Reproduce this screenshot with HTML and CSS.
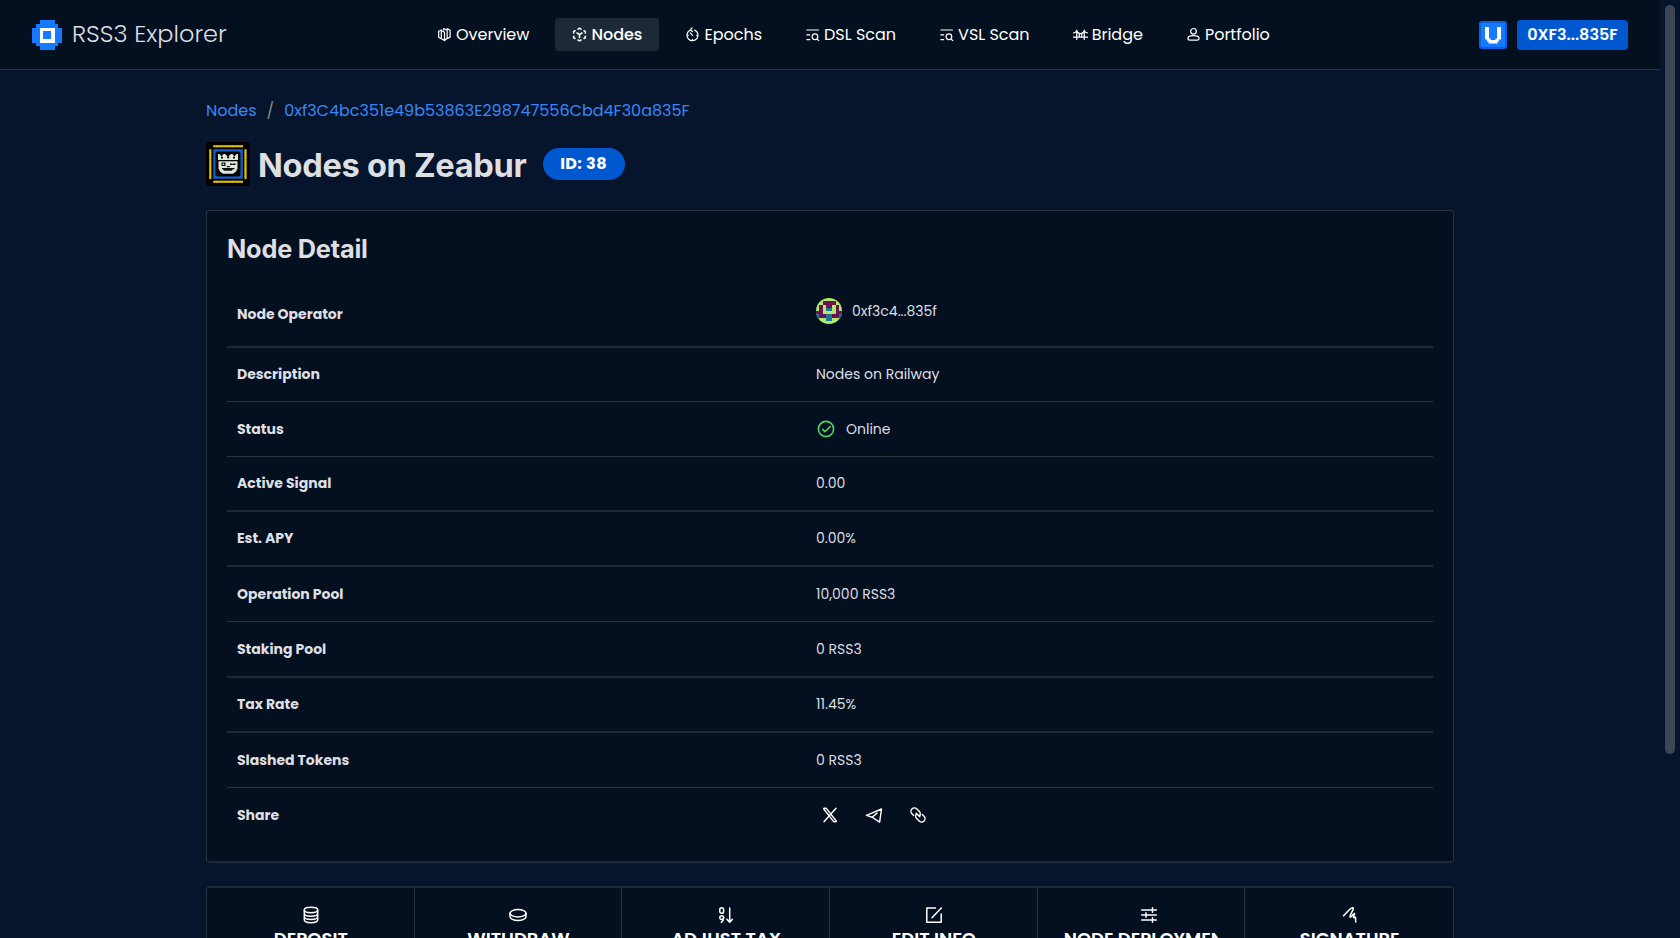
FILE: index.html
```
<!DOCTYPE html>
<html lang="en">
<head>
<meta charset="utf-8">
<title>RSS3 Explorer</title>
<link rel="stylesheet" href="styles.css">
</head>
<body>
<header class="header">
  <a class="brand">
    <svg class="brand-logo" viewBox="0 0 8 8" shape-rendering="crispEdges"><path fill="#147aff" d="M2 0h4v1h1v1h1v4h-1v1h-1v1h-4v-1h-1v-1h-1v-4h1v-1h1z"/><path fill="#fff" d="M2 2h4v4h-4z"/><path fill="#147aff" d="M3 3h2v2h-2z"/></svg>
    <span>RSS3 Explorer</span>
  </a>
  <nav class="nav">
    <a class="nav-item"><svg class="ico" viewBox="0 0 16 16"><path d="M4.600 12.600 1.800 11V4.600l2.800-1.400M4.600 3.800l3.400 1.800v8.800l-3.400-1.800zM7.200 3.400V1.600l3.600 1.800V12L8 14.400M10.800 3.400l.2-1.600L14 3.600v7.200l-3.200 1.600"/></svg>Overview</a>
    <a class="nav-item active"><svg class="ico" viewBox="0 0 16 16"><path stroke-width="1.700" d="M6.400 2.300 8 1.400l1.600.9M12.800 4l1.400.8v1.600M14.200 10v1.400l-1.400.8M9.600 13.900l-1.600.9-1.600-.9M3.200 12.200l-1.400-.8V10M1.800 6.400V4.800L3.200 4M8 11.200v-3L5.400 6.400M8 8.200l2.600-1.800"/></svg>Nodes</a>
    <a class="nav-item"><svg class="ico" viewBox="0 0 16 16"><path d="M10.300 3.300a5.900 5.900 0 1 1-5.400.4M8 9 5.600 6.300M7.600 1 5.700 3.200l2.300 1.700M8 13.200v1.400M2.200 9h1.300M12.500 9h1.300"/></svg>Epochs</a>
    <a class="nav-item"><svg class="ico" viewBox="0 0 16 16"><path d="M2 3.200h12.400M2 8.400h3M2 13.400h3M13.200 13.400l1.500 1"/><circle cx="10.600" cy="10.400" r="3"/></svg>DSL Scan</a>
    <a class="nav-item"><svg class="ico" viewBox="0 0 16 16"><path d="M2 3.200h12.400M2 8.400h3M2 13.400h3M13.200 13.400l1.500 1"/><circle cx="10.600" cy="10.400" r="3"/></svg>VSL Scan</a>
    <a class="nav-item"><svg class="ico" viewBox="0 0 16 16"><path d="M.5 10.700h15M4 3.400v9.800M12 3.400v9.800M.7 6.200C2.400 6 3.600 5.200 4 3.800 4.800 8 11.200 8 12 3.800c.4 1.400 1.600 2.200 3.300 2.400M6.700 7.200v3.400M9.300 7.200v3.400"/></svg>Bridge</a>
    <a class="nav-item"><svg class="ico" viewBox="0 0 16 16"><circle cx="8" cy="4.600" r="3"/><path d="M2.100 12.200c0-1.600 2.400-2.900 5.900-2.900s5.900 1.300 5.900 2.900c0 1.100-.9 1.700-2.200 1.700H4.300c-1.300 0-2.200-.6-2.200-1.700z"/></svg>Portfolio</a>
  </nav>
  <div class="account">
    <svg class="chain" viewBox="0 0 28 28"><rect width="28" height="28" rx="3" fill="#0b5fe0"/><path fill="#147aff" d="M2 2h24v24H2z"/><path fill="#fff" d="M6 6h4v11.500h1.500V19h5v-1.500H18V6h4v12.500h-2v2h-1.500v2h-9v-2H8v-2H6z"/></svg>
    <button class="wallet">0XF3...835F</button>
  </div>
</header>
<div class="scroll-thumb"></div>
<main class="main">
  <div class="crumbs"><a>Nodes</a><span class="sep">/</span><a>0xf3C4bc351e49b53863E298747556Cbd4F30a835F</a></div>
  <div class="title-row">
    <svg class="node-avatar" viewBox="0 0 44 44">
      <rect width="44" height="44" rx="3.500" fill="#000"/>
      <path stroke="#a88700" stroke-width="2" d="M7.500 4.200h29.500M7.500 39.700h29.500M4.300 7.500V37M39.500 7.500V37"/>
      <path stroke="#ffe600" stroke-width="2" stroke-dasharray="1.200 .8" d="M7.500 4.200h29.500M7.500 39.700h29.500M4.300 7.500V37M39.500 7.500V37"/>
      <path fill="#1460cf" fill-rule="evenodd" d="M7.300 7.300h29.500v29.500H7.300zM11 9.500 9.500 11v22l1.500 1.500h22l1.500-1.500V11L33 9.500z"/>
      <path fill="#dce8d8" d="M12 12h1.500l2 2.500 2-2.500h1.500l3 2.500 3-2.500h1.500l2 2.500 2-2.500H32v6H12z"/>
      <path fill="#dce8d8" d="M12.500 19.300h19v7.200l-1.500 3-3 2.300H17l-3-2.300-1.500-3z"/>
      <path fill="#111" d="M15 14.800h2v1.600h-2zM21 14.300h2.200v2H21zM27 14.800h2v1.600h-2zM15.500 20.500h4v3.500h-4zM24 21.500h5.500V23H24zM20.800 24h3v1.200h-3zM16 26h12.500v1.200H27l-1.500 1.500h-7L16.500 27.200H16z"/>
      <path fill="#dce8d8" d="M16.700 21.500h1.500V23h-1.500zM26 21.500h1v.7h-1z"/>
    </svg>
    <h1>Nodes on Zeabur</h1>
    <span class="badge">ID: 38</span>
  </div>

  <section class="card">
    <h2>Node Detail</h2>
    <dl class="rows">
      <div class="row first thick"><dt>Node Operator</dt><dd class="operator">
        <svg class="identicon" viewBox="0 0 8 8"><defs><clipPath id="round"><circle cx="4" cy="4" r="4"/></clipPath></defs><g clip-path="url(#round)" shape-rendering="crispEdges"><path fill="#b0ea6c" d="M0 0h8v8H0z"/><path fill="#6d1250" d="M2 1h4v1H2zM1 2h1v3H1zM6 2h1v3H6zM3 2h2v1H3zM0 4h1v1H0zM7 4h1v1H7zM1 5h2v1H1zM5 5h2v1H5z"/><path fill="#1a7598" d="M3 3h2v1H3zM0 5h1v2H0zM7 5h1v2H7zM3 5h2v2H3z"/></g></svg>
        <span>0xf3c4...835f</span></dd></div>
      <div class="row"><dt>Description</dt><dd>Nodes on Railway</dd></div>
      <div class="row"><dt>Status</dt><dd class="status"><svg viewBox="0 0 20 20"><circle cx="10" cy="10" r="7.600"/><path d="m6.700 10.400 2.300 2.300 5-5.100"/></svg>Online</dd></div>
      <div class="row thick"><dt>Active Signal</dt><dd>0.00</dd></div>
      <div class="row thick"><dt>Est. APY</dt><dd>0.00%</dd></div>
      <div class="row"><dt>Operation Pool</dt><dd>10,000 RSS3</dd></div>
      <div class="row thick tall"><dt>Staking Pool</dt><dd>0 RSS3</dd></div>
      <div class="row thick"><dt>Tax Rate</dt><dd>11.45%</dd></div>
      <div class="row"><dt>Slashed Tokens</dt><dd>0 RSS3</dd></div>
      <div class="row last"><dt>Share</dt><dd class="share">
        <svg viewBox="0 0 24 24"><path d="M16.820 20.768 3.753 3.968C3.447 3.574 3.727 3 4.227 3h2.480c.185 0 .36.085.473.232l13.067 16.800c.306.394.026.968-.474.968h-2.480a.6.6 0 0 1-.473-.232Z"/><path d="M20 3 4 21"/></svg>
        <svg viewBox="0 0 24 24"><path d="M22 4 2 12.500l7.500 2.500 10 6.500zM9.500 15l6.500-5.500"/></svg>
        <svg viewBox="0 0 24 24"><path transform="rotate(45 12 12)" d="M8.500 16.600H5.200a4.600 4.600 0 0 1 0-9.200H10a4.600 4.600 0 0 1 4.300 3M15.500 7.400h3.300a4.600 4.600 0 0 1 0 9.200H14a4.600 4.600 0 0 1-4.300-3M8.500 12h7"/></svg>
      </dd></div>
    </dl>
  </section>

  <section class="actions">
    <button class="action"><svg viewBox="0 0 18 18"><ellipse cx="9" cy="4" rx="6.700" ry="2.700"/><path d="M2.300 4v9.800c0 1.600 3 2.900 6.700 2.900s6.700-1.300 6.700-2.900V4M2.300 7.600c0 1.500 3 2.700 6.700 2.700s6.700-1.200 6.700-2.700M2.300 10.800c0 1.500 3 2.700 6.700 2.700s6.700-1.200 6.700-2.700"/></svg><span>DEPOSIT</span></button>
    <button class="action"><svg viewBox="0 0 18 18"><ellipse cx="9" cy="7.300" rx="8" ry="3.700"/><path d="M1 7.300v3.500c0 2 3.600 3.700 8 3.700s8-1.700 8-3.700V7.300"/></svg><span>WITHDRAW</span></button>
    <button class="action"><svg viewBox="0 0 18 18"><rect x="2.800" y="1.700" width="3.800" height="5.600" rx="1.900"/><circle cx="4.700" cy="11.700" r="1.900"/><path d="M6.600 11.700c0 2-.8 3.400-2.300 4.600M12.700 2v14M10 13.400l2.700 2.700 2.700-2.700"/></svg><span>ADJUST TAX</span></button>
    <button class="action"><svg viewBox="0 0 18 18"><path d="M10.500 2H1.800v14.200h14.400V8M16.300 2 7 11.700"/></svg><span>EDIT INFO</span></button>
    <button class="action wide"><svg viewBox="0 0 18 18"><path d="M1.700 4h14.600M1.700 9h14.600M1.700 14h14.600M12.500 1.800v4.400M6 6.800v4.400M12.500 11.800v4.400"/></svg><span>NODE DEPLOYMENT</span></button>
    <button class="action"><svg viewBox="0 0 18 18"><path d="M2.500 9.800C5 8 8.500 2 11.500 1.700c3-.2-3.600 8-2.500 9.300 1 .9 4-4.400 4.600-3.500.5.9-1.900 3.900-.9 4.200s1.400-.8 1.800-.4-.2 2.200.3 4.700"/></svg><span>SIGNATURE</span></button>
  </section>
</main>
</body>
</html>
```
FILE: styles.css
```
* { box-sizing: border-box; }
body {
  margin: 0;
  height: 938px;
  overflow: hidden;
  background: #06152b;
  color: #dedfe3;
  font-family: Poppins, Inter, sans-serif;
}
svg { display: block; fill: none; flex: none; }
button { font-family: inherit; border: 0; color: #fff; }

.header {
  display: grid;
  grid-template-columns: 420px 1fr auto;
  align-items: center;
  width: 1660px;
  height: 70px;
  padding-right: 32px;
  background: #04101f;
  border-bottom: 1px solid #28333e;
}
.brand {
  display: flex;
  align-items: center;
  gap: 10px;
  padding-left: 32px;
  font-size: 24px;
  font-weight: 300;
  line-height: 30px;
}
.brand span { margin-top: -1px; }
.brand-logo { width: 30px; height: 30px; }
.nav { display: flex; gap: 9px; }
.nav-item {
  display: flex;
  align-items: center;
  gap: 4px;
  height: 33px;
  padding: 0 17px;
  border-radius: 4px;
  color: #fff;
  font-size: 16px;
}
.nav-item.active { background: #1e2937; font-weight: 500; }
.ico { width: 15px; height: 15px; stroke: #fff; stroke-width: 1.3; stroke-linecap: round; stroke-linejoin: round; }
.account { display: flex; align-items: center; gap: 10px; }
.chain { width: 28px; height: 28px; }
.wallet {
  width: 111px;
  height: 30px;
  padding: 0;
  border-radius: 4px;
  background: #0058d0;
  font-size: 16px;
  font-weight: 600;
}
.scroll-thumb {
  position: absolute;
  left: 1665px;
  top: 5px;
  width: 10px;
  height: 749px;
  border-radius: 5px;
  background: #3c4655;
}

.main { width: 1248px; margin-left: 206px; }
.crumbs {
  display: flex;
  padding-top: 28.500px;
  line-height: 24px;
  font-size: 16px;
  color: #3b86f7;
}
.sep { padding: 0 10px; color: #83888f; }
.title-row { display: flex; align-items: center; height: 44px; margin-top: 19.500px; }
.node-avatar { width: 44px; height: 44px; }
h1, h2 { margin: 0; font-family: Inter, sans-serif; font-weight: 700; }
h1 { margin-left: 8px; font-size: 32.600px; line-height: 44px; padding-top: 2px; letter-spacing: -.3px; }
.badge {
  width: 82px;
  height: 32px;
  margin-left: 16px;
  border-radius: 16px;
  background: #0058d0;
  color: #fff;
  font-size: 16px;
  font-weight: 700;
  line-height: 32px;
  letter-spacing: .4px;
  text-align: center;
}

.card {
  height: 653px;
  margin-top: 24px;
  padding: 20px;
  border: 1px solid #2a343f;
  border-bottom: 2px solid #1e2a37;
  border-radius: 4px;
  background: #04101f;
}
h2 { height: 49px; font-size: 25.300px; line-height: 36px; letter-spacing: -.2px; }
.rows { margin: 0; font-size: 14px; }
.row {
  display: grid;
  grid-template-columns: 1fr 1fr;
  align-items: center;
  height: 55px;
  border-bottom: 1px solid #2a343f;
}
.row.thick { border-bottom: 2px solid #1e2a37; }
.row.first { height: 68px; padding-top: 1px; }
.row.first dt { padding-top: 1px; }
.row.first + .row { height: 54px; }
.row.tall { height: 56px; }
.row.last { border: 0; }
dt { padding-left: 10px; font-weight: 700; }
dd { display: flex; align-items: center; margin: 0 0 0 -14px; }
.operator { gap: 10px; padding-bottom: 5px; }
.identicon { width: 26px; height: 26px; }
.status { gap: 10px; }
.status svg { width: 20px; height: 20px; stroke: #4fd367; stroke-width: 1.6; stroke-linecap: round; stroke-linejoin: round; }
.share { gap: 26px; padding: 0 0 1px 5px; }
.share svg { width: 18px; height: 18px; stroke: #fff; stroke-width: 1.9; stroke-linecap: round; stroke-linejoin: round; }

.actions {
  display: grid;
  grid-template-columns: repeat(6, 1fr);
  height: 90px;
  margin-top: 23px;
  border: 1px solid #2a343f;
  border-top: 2px solid #1e2a37;
  border-radius: 4px;
  background: #04101f;
}
.action {
  display: flex;
  flex-direction: column;
  align-items: center;
  min-width: 0;
  padding: 18px 25px 0 26px;
  background: none;
  border-right: 1px solid #2a343f;
  font-size: 18px;
  font-weight: 600;
}
.action:last-child { border: 0; }
.action svg { width: 18px; height: 18px; stroke: #fff; stroke-width: 1.5; stroke-linecap: round; stroke-linejoin: round; }
/* The icon centres on the full label, which is clipped on the right. */
.action.wide svg { margin-left: 16px; }
.action span { max-width: 100%; margin-top: 1px; overflow: hidden; white-space: nowrap; line-height: 27px; }
```
